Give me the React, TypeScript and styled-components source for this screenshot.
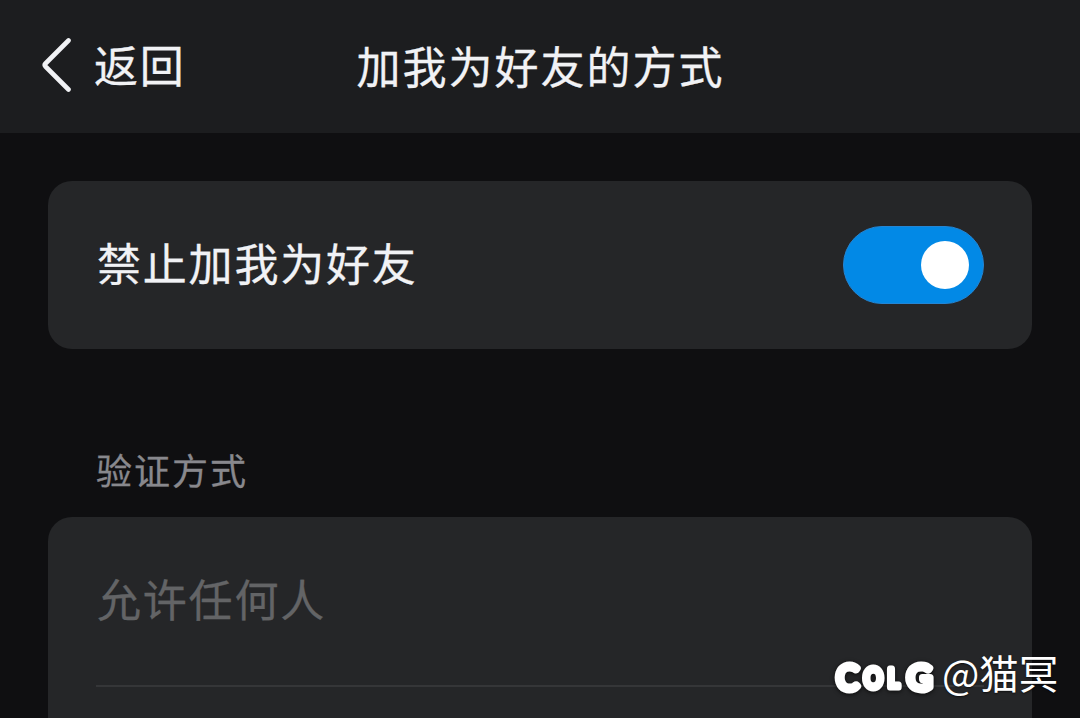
import { useState } from "react"
import styled, { createGlobalStyle } from "styled-components"

const VERIFY_OPTIONS = ["允许任何人"]

const BRAND_LETTERS = [
	{ char: "C", x: 836.5, y: 689, size: 34, width: 22 },
	{ char: "O", x: 864, y: 686.5, size: 26, width: 18.5 },
	{ char: "L", x: 888, y: 685.5, size: 25, width: 11 },
	{ char: "G", x: 907, y: 689, size: 34, width: 25 },
]

const App: React.FC = () => {
	const [blocked, setBlocked] = useState(true)

	return (
		<>
			<GlobalStyle />
			<Screen>
				<Header>
					<BackButton>
						<BackIcon viewBox="0 0 32 56">
							<path d="M27.5 2.5 4.5 25.5Q3 27 4.5 28.5L27.5 51.5" />
						</BackIcon>
						返回
					</BackButton>
					<Title>加我为好友的方式</Title>
				</Header>

				<Content>
					<Card>
						<Row>
							<Label>禁止加我为好友</Label>
							<Switch
								role="switch"
								aria-checked={blocked}
								$on={blocked}
								onClick={() => setBlocked(!blocked)}
							>
								<Thumb />
							</Switch>
						</Row>
					</Card>

					<SectionTitle>验证方式</SectionTitle>

					<Card $open>
						{VERIFY_OPTIONS.map((option) => (
							<Row key={option} $divided>
								<Label $disabled={blocked}>{option}</Label>
							</Row>
						))}
					</Card>
				</Content>

				<Watermark>
					<Brand viewBox="830 656 108 42">
						{BRAND_LETTERS.map(({ char, x, y, size, width }) => (
							<text
								key={char}
								x={x}
								y={y}
								fontSize={size}
								textLength={width}
								lengthAdjust="spacingAndGlyphs"
							>
								{char}
							</text>
						))}
					</Brand>
					<Author>@猫冥</Author>
				</Watermark>
			</Screen>
		</>
	)
}

export default App

const GlobalStyle = createGlobalStyle`
	* {
		box-sizing: border-box;
	}

	body {
		margin: 0;
		background: #0f0f11;
		font-family: "Noto Sans CJK SC", sans-serif;
	}

	button {
		padding: 0;
		border: 0;
		background: none;
		color: inherit;
		font: inherit;
	}
`

const Screen = styled.div`
	position: relative;
	height: 718px;
	overflow: hidden;
	color: #f1f2f5;
	background: #0f0f11;
	-webkit-text-stroke: 0.3px currentColor;
`

const Header = styled.header`
	display: grid;
	grid-template-columns: 1fr auto 1fr;
	align-items: center;
	height: 133px;
	padding: 0 40px;
	background: #1c1d1f;
`

const BackButton = styled.button`
	display: flex;
	align-items: center;
	gap: 21px;
	padding: 0 0 6px 1px;
	font-size: 44px;
	line-height: 60px;
	letter-spacing: 1.8px;
`

const BackIcon = styled.svg`
	width: 32px;
	height: 56px;
	margin-top: 4px;
	fill: none;
	stroke: #f1f2f5;
	stroke-width: 4.6;
	stroke-linecap: round;
	stroke-linejoin: round;
`

const Title = styled.h1`
	margin: 0;
	padding: 0 0 4px 1px;
	font-size: 44px;
	font-weight: 400;
	line-height: 60px;
	letter-spacing: 2px;
`

const Content = styled.main`
	padding: 48px 48px 0;
`

const Card = styled.section<{ $open?: boolean }>`
	height: ${({ $open }) => ($open ? "240px" : "168px")};
	border-radius: 24px;
	background: #252628;
`

const Row = styled.div<{ $divided?: boolean }>`
	display: flex;
	align-items: center;
	justify-content: space-between;
	height: ${({ $divided }) => ($divided ? "170px" : "168px")};
	margin: 0 48px;
	border-bottom: ${({ $divided }) => ($divided ? "2px solid #353638" : "0")};
`

const Label = styled.span<{ $disabled?: boolean }>`
	padding: 0 0 6px 1px;
	font-size: 44px;
	line-height: 60px;
	letter-spacing: 1.8px;
	color: ${({ $disabled }) => ($disabled ? "#636466" : "#f1f2f5")};
`

const Switch = styled.button<{ $on: boolean }>`
	display: flex;
	align-items: center;
	justify-content: ${({ $on }) => ($on ? "flex-end" : "flex-start")};
	width: 141px;
	height: 78px;
	padding: 0 14px 1px;
	border: 1px solid ${({ $on }) => ($on ? "#2485d3" : "#4a4b4d")};
	border-radius: 39px;
	background: ${({ $on }) => ($on ? "#0289e6" : "#4a4b4d")};
`

const Thumb = styled.span`
	width: 48px;
	height: 48px;
	border-radius: 50%;
	background: #fff;
`

const SectionTitle = styled.h2`
	margin: 0;
	padding: 95px 48px 23px;
	color: #88888d;
	font-size: 36px;
	font-weight: 400;
	line-height: 50px;
	letter-spacing: 2px;
`

const Watermark = styled.div`
	position: absolute;
	left: 830px;
	bottom: 16px;
	display: flex;
	align-items: center;
	gap: 4px;
	color: #fff;
`

const Brand = styled.svg`
	width: 108px;
	height: 42px;
	margin-top: 5px;
	overflow: visible;
	fill: #fff;
	stroke: #fff;
	stroke-width: 7;
	stroke-linejoin: round;
	font-family: Lato, sans-serif;
	-webkit-text-stroke: 7px #fff;
	filter: drop-shadow(0 1px 2px rgba(0, 0, 0, 0.7));
`

const Author = styled.span`
	padding-bottom: 6px;
	font-size: 39.5px;
	line-height: 48px;
	-webkit-text-stroke: 0;
	text-shadow: 0 1px 2px rgba(0, 0, 0, 0.6);
`
